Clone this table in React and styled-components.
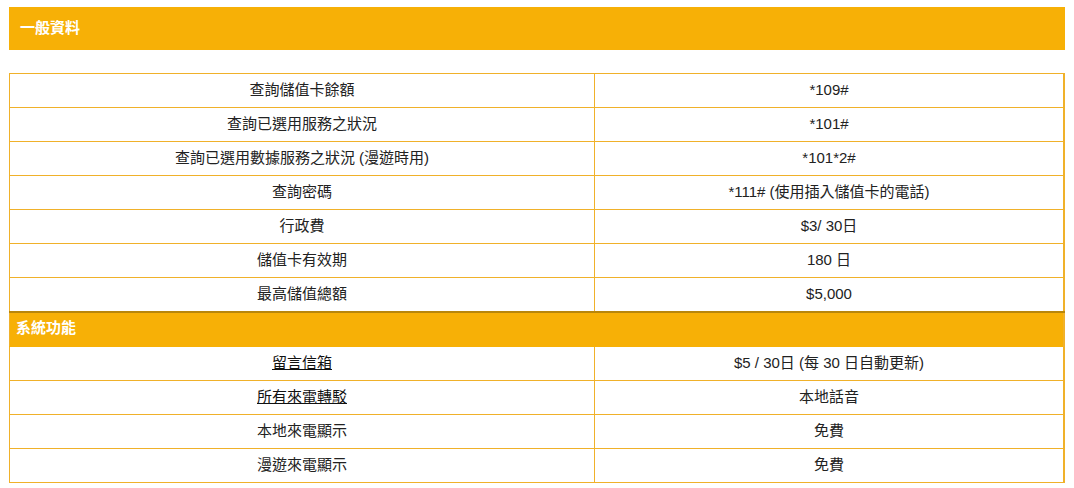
import styled, { createGlobalStyle } from 'styled-components'

const GlobalStyle = createGlobalStyle`
  body {
    margin: 0;
    background: #fff;
    font-family: "Liberation Sans", Arial, "Noto Sans CJK TC", sans-serif;
  }
`

const Page = styled.div`
  padding: 7px 9px 0 9px;
  width: 1056px;
`

const TitleBar = styled.h2`
  margin: 0;
  height: 43px;
  background: #f7b006;
  color: #fff;
  font-size: 15px;
  font-weight: bold;
  display: flex;
  align-items: center;
  padding: 0 0 4px 11px;
  box-sizing: border-box;
`

const Table = styled.table`
  margin-top: 23px;
  width: 1056px;
  border-collapse: collapse;
  font-size: 15px;
  line-height: 20px;
  color: #222;
  border-left: 1px solid #f0b12a;
  border-right: 2px solid #f0b12a;
`

const Cell = styled.td`
  height: 31px;
  padding: 0 0 2px 0;
  text-align: center;
  border: 1px solid #f0b12a;
  width: ${p => p.$w || 'auto'};
`

const SectionCell = styled.td`
  height: 29px;
  padding: 0 0 4px 6px;
  background: #f7b006;
  color: #fff;
  font-weight: bold;
  border-top: 2px solid #b8860b;
  border-bottom: 1px solid #f7b006;
`

const Link = styled.span`
  text-decoration: underline;
  color: #111;
`

const general = [
  ['查詢儲值卡餘額', '*109#'],
  ['查詢已選用服務之狀況', '*101#'],
  ['查詢已選用數據服務之狀況 (漫遊時用)', '*101*2#'],
  ['查詢密碼', '*111# (使用插入儲值卡的電話)'],
  ['行政費', '$3/ 30日'],
  ['儲值卡有效期', '180 日'],
  ['最高儲值總額', '$5,000'],
]

const features = [
  ['留言信箱', '$5 / 30日 (每 30 日自動更新)', true],
  ['所有來電轉駁', '本地話音', true],
  ['本地來電顯示', '免費'],
  ['漫遊來電顯示', '免費'],
]

export default function App() {
  return (
    <>
      <GlobalStyle />
      <Page>
        <TitleBar>一般資料</TitleBar>
        <Table>
          <tbody>
            {general.map(([k, v], i) => (
              <tr key={k}>
                <Cell $w={i === 0 ? '584px' : undefined}>{k}</Cell>
                <Cell>{v}</Cell>
              </tr>
            ))}
            <tr>
              <SectionCell colSpan={2}>系統功能</SectionCell>
            </tr>
            {features.map(([k, v, link]) => (
              <tr key={k}>
                <Cell>{link ? <Link>{k}</Link> : k}</Cell>
                <Cell>{v}</Cell>
              </tr>
            ))}
          </tbody>
        </Table>
      </Page>
    </>
  )
}
